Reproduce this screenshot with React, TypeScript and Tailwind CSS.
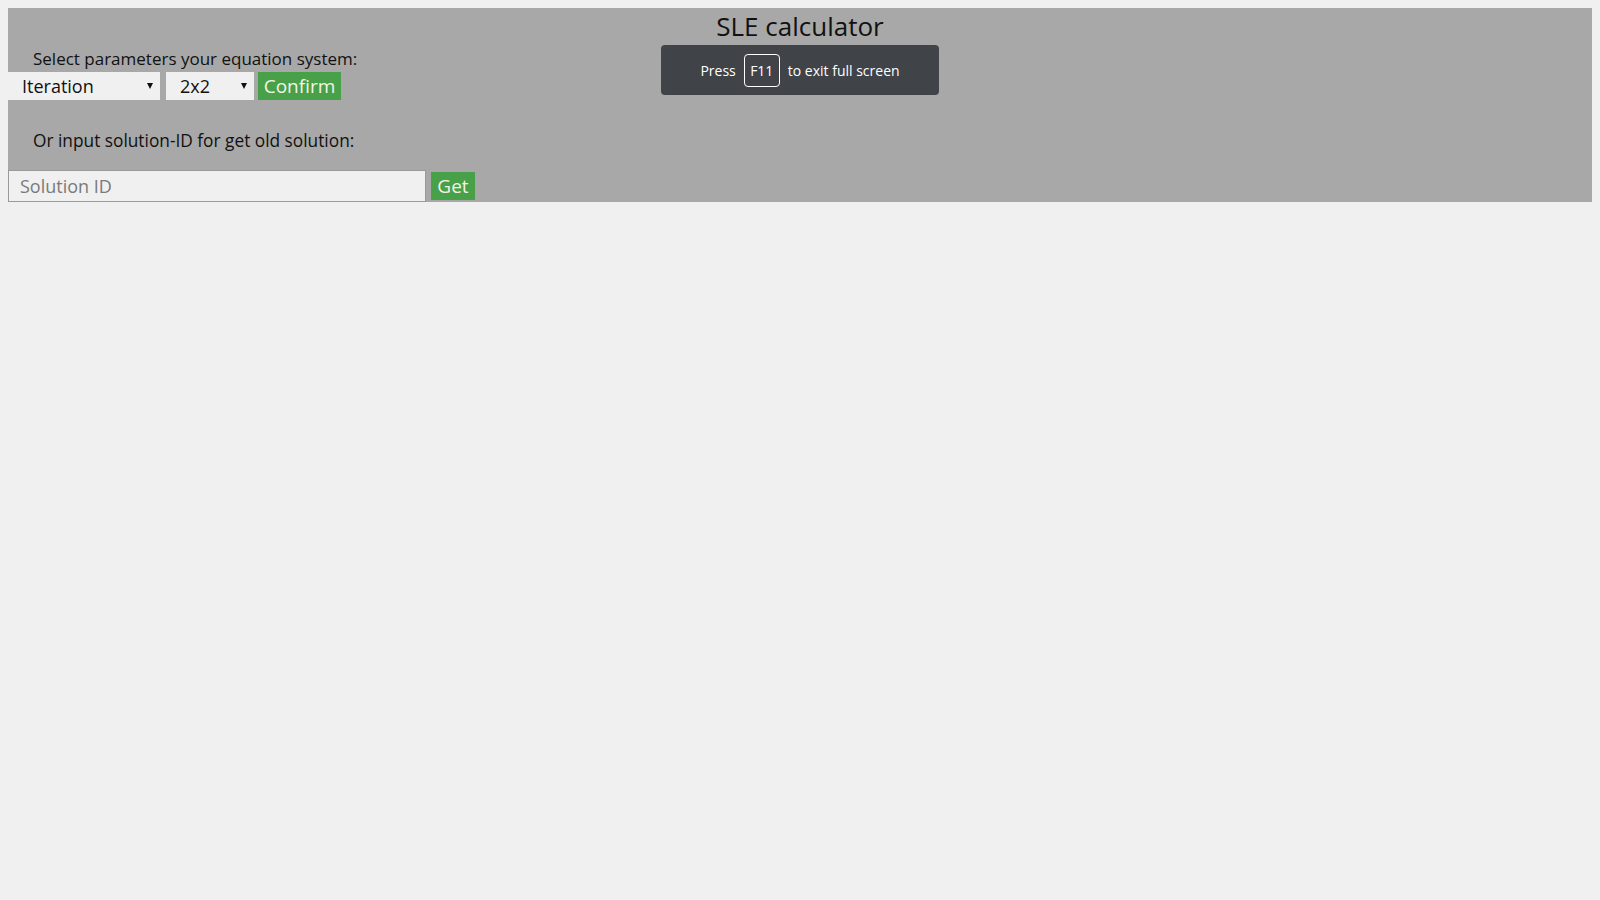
import React from "react";

function Select({ value, width, options }: { value: string; width: string; options: string[] }) {
  return (
    <div className={`relative h-[28px] ${width}`}>
      <select
        defaultValue={value}
        className="h-full w-full appearance-none bg-[#f0f0f0] pl-[14px] text-[18px] leading-[28px] text-[#111] outline-none border-0 rounded-none"
      >
        {options.map((o) => (
          <option key={o}>{o}</option>
        ))}
      </select>
      <svg className="pointer-events-none absolute right-[7px] top-[11px]" width="6" height="6" viewBox="0 0 6 6">
        <polygon points="0,0 6,0 3,6" fill="#111" />
      </svg>
    </div>
  );
}

export default function App() {
  return (
    <div className="min-h-screen bg-[#f0f0f0] p-2 font-['Open_Sans',sans-serif] text-[#111]">
      <div className="h-[194px] bg-[#a8a8a8]">
        <h1 className="pt-px text-center text-[26px] leading-[35px] font-normal">SLE calculator</h1>
        <p className="mt-[3px] pl-[25px] text-[17px] leading-[24px]">Select parameters your equation system:</p>
        <div className="mt-px flex items-center">
          <Select value="Iteration" width="w-[152px]" options={["Iteration", "Gauss", "Jacobi"]} />
          <div className="ml-[6px]">
            <Select value="2x2" width="w-[88px]" options={["2x2", "3x3", "4x4"]} />
          </div>
          <button className="ml-[4px] h-[28px] w-[83px] bg-[#48a048] text-[19px] leading-[28px] text-[#f3f3ea]">
            Confirm
          </button>
        </div>
        <p className="mt-[29px] pl-[25px] text-[17.3px] leading-[24px]">Or input solution-ID for get old solution:</p>
        <div className="mt-[17px] flex items-center">
          <input
            placeholder="Solution ID"
            className="h-[32px] w-[418px] border border-[#9a9a9a] bg-[#f0f0f0] pl-[11px] text-[18px] outline-none placeholder:text-[#7a7a7a]"
          />
          <button className="ml-[5px] h-[28px] w-[44px] bg-[#48a048] text-[19px] leading-[28px] text-[#f3f3ea]">
            Get
          </button>
        </div>
      </div>

      <div className="absolute left-1/2 top-[45px] flex h-[50px] w-[278px] -translate-x-1/2 items-center justify-center rounded-[4px] bg-[#404347] text-[14px] text-white">
        <span>Press</span>
        <span className="mx-[8px] flex h-[33px] w-[36px] items-center justify-center rounded-[4px] border border-white">F11</span>
        <span>to exit full screen</span>
      </div>
    </div>
  );
}
